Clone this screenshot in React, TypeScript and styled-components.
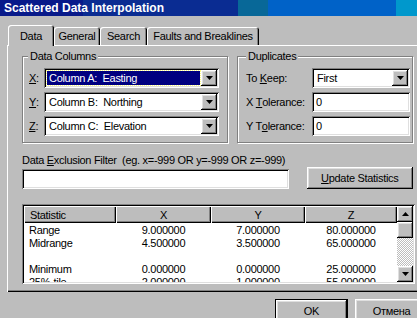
import React from "react";
import styled, { createGlobalStyle, css } from "styled-components";

const face = "#bdbdbd";
const shadow = "#808080";
const light = "#dfdfdf";

const raised = css`
  box-shadow: inset -1px -1px #000, inset 1px 1px #fff, inset -2px -2px ${shadow},
    inset 2px 2px ${light};
`;

const sunken = css`
  box-shadow: inset 1px 1px ${shadow}, inset -1px -1px #fff, inset 2px 2px #000,
    inset -2px -2px ${light};
`;

const GlobalStyle = createGlobalStyle`
  html, body {
    margin: 0;
    overflow: hidden;
    background: ${face};
  }
  body {
    font-family: "Liberation Sans", Arial, sans-serif;
    font-size: 11px;
    letter-spacing: -0.3px;
    color: #000;
  }
`;

const Window = styled.div`
  width: 432px;
  height: 318px;
  display: flex;
  flex-direction: column;
  background: ${face};
`;

const TitleBar = styled.div`
  height: 16px;
  flex-shrink: 0;
  display: flex;
  align-items: center;
  padding-left: 4px;
  color: #fff;
  font-weight: bold;
  font-size: 12px;
  letter-spacing: 0;
  background: linear-gradient(
    to right,
    #081a8a 0 83px,
    #0a2c92 83px 238px,
    #086898 238px 268px,
    #0062c8 268px 396px,
    #0098cc 396px
  );
`;

const Body = styled.div`
  flex: 1;
  display: flex;
  flex-direction: column;
  padding: 9px 4px 0 7px;
`;

const TabStrip = styled.div`
  display: flex;
  align-items: flex-end;
  height: 20px;
  padding-left: 1px;
`;

const Tab = styled.div<{ $active?: boolean; $width: number }>`
  width: ${(p) => p.$width}px;
  height: ${(p) => (p.$active ? 21 : 18)}px;
  margin-bottom: ${(p) => (p.$active ? -1 : 0)}px;
  position: relative;
  z-index: ${(p) => (p.$active ? 2 : 0)};
  display: flex;
  align-items: center;
  justify-content: center;
  background: ${face};
  border-radius: 3px 3px 0 0;
  box-shadow: inset 1px 1px #fff, inset -1px 0 #000, inset -2px 0 ${shadow};
`;

const Panel = styled.div`
  height: 247px;
  flex-shrink: 0;
  padding: 11px 15px 0 15px;
  box-sizing: border-box;
  box-shadow: inset 1px 1px #fff, inset -1px -1px #000, inset -2px -2px ${shadow};
`;

const GroupsRow = styled.div`
  display: flex;
  gap: 9px;
  height: 87px;
`;

const GroupBox = styled.div<{ $width: number; $labelCol: number; $padLeft: number }>`
  position: relative;
  width: ${(p) => p.$width}px;
  box-sizing: border-box;
  border: 1px solid ${shadow};
  box-shadow: 1px 1px 0 #fff, inset 1px 1px 0 #fff;
  padding: 11px 0 0 ${(p) => p.$padLeft}px;
  display: grid;
  grid-template-columns: ${(p) => p.$labelCol}px 1fr;
  grid-auto-rows: 20px;
  row-gap: 4px;
  align-content: start;
`;

const Legend = styled.span<{ $left: number }>`
  position: absolute;
  top: -7px;
  left: ${(p) => p.$left}px;
  padding: 0 2px;
  line-height: 13px;
  background: ${face};
`;

const FieldLabel = styled.label`
  display: flex;
  align-items: center;
  white-space: pre;
`;

const Combo = styled.div<{ $width: number }>`
  width: ${(p) => p.$width}px;
  height: 20px;
  box-sizing: border-box;
  padding: 2px;
  display: flex;
  background: #fff;
  ${sunken};
`;

const ComboValue = styled.div<{ $focused?: boolean }>`
  flex: 1;
  display: flex;
  align-items: center;
  margin: 1px;
  padding-left: 2px;
  white-space: pre;
  ${(p) =>
    p.$focused &&
    css`
      background: #000080;
      color: #fff;
      outline: 1px dotted #ffff80;
    `}
`;

const DropButton = styled.div`
  width: 16px;
  display: flex;
  align-items: center;
  justify-content: center;
  background: ${face};
  ${raised};
`;

const TextField = styled.div<{ $width: number }>`
  width: ${(p) => p.$width}px;
  height: 20px;
  box-sizing: border-box;
  padding-left: 4px;
  display: flex;
  align-items: center;
  background: #fff;
  ${sunken};
`;

const FilterLabel = styled.div`
  margin-top: 11px;
  line-height: 13px;
  white-space: pre;
`;

const FilterRow = styled.div`
  display: flex;
  align-items: flex-end;
  gap: 18px;
  height: 22px;
`;

const Button = styled.div<{ $width: number; $height: number; $default?: boolean }>`
  width: ${(p) => p.$width}px;
  height: ${(p) => p.$height}px;
  box-sizing: border-box;
  display: flex;
  align-items: center;
  justify-content: center;
  background: ${face};
  ${(p) =>
    p.$default
      ? css`
          border: 1px solid #000;
          ${raised};
        `
      : raised};
`;

const Table = styled.div`
  margin-top: 15px;
  width: 393px;
  height: 80px;
  box-sizing: border-box;
  padding: 2px;
  display: grid;
  grid-template-columns: 1fr 16px;
  background: #fff;
  ${sunken};
`;

const TableBody = styled.div`
  overflow: hidden;
`;

const columns = "92px 95px 94px 92px";

const HeaderRow = styled.div`
  display: grid;
  grid-template-columns: ${columns};
  height: 17px;
`;

const HeaderCell = styled.div<{ $left?: boolean }>`
  display: flex;
  align-items: center;
  justify-content: ${(p) => (p.$left ? "flex-start" : "center")};
  padding-left: ${(p) => (p.$left ? 6 : 0)}px;
  background: ${face};
  box-shadow: inset 1px 1px #fff, inset -1px -1px #000, inset -2px -2px ${shadow};
`;

const Rows = styled.div`
  padding-top: 1px;
`;

const Row = styled.div`
  display: grid;
  grid-template-columns: ${columns};
  height: 13px;
  line-height: 13px;
`;

const Cell = styled.div<{ $left?: boolean }>`
  text-align: ${(p) => (p.$left ? "left" : "center")};
  padding-left: ${(p) => (p.$left ? 5 : 0)}px;
  white-space: pre;
`;

const ScrollBar = styled.div`
  display: flex;
  flex-direction: column;
`;

const ScrollButton = styled.div`
  height: 16px;
  flex-shrink: 0;
  display: flex;
  align-items: center;
  justify-content: center;
  background: ${face};
  ${raised};
`;

const Track = styled.div`
  flex: 1;
  background: repeating-conic-gradient(#fff 0 25%, ${face} 0 50%) 0 0 / 2px 2px;
`;

const ButtonRow = styled.div`
  display: flex;
  justify-content: flex-end;
  gap: 7px;
  margin-top: 7px;
`;

const Arrow = ({ up }: { up?: boolean }) => (
  <svg width="7" height="4" viewBox="0 0 7 4">
    <path d={up ? "M3.5 0L7 4H0z" : "M0 0h7L3.5 4z"} fill="#000" />
  </svg>
);

const ComboBox = ({
  value,
  width,
  focused,
}: {
  value: string;
  width: number;
  focused?: boolean;
}) => (
  <Combo $width={width}>
    <ComboValue $focused={focused}>{value}</ComboValue>
    <DropButton>
      <Arrow />
    </DropButton>
  </Combo>
);

const stats = [
  ["Range", "9.000000", "7.000000", "80.000000"],
  ["Midrange", "4.500000", "3.500000", "65.000000"],
  ["", "", "", ""],
  ["Minimum", "0.000000", "0.000000", "25.000000"],
  ["25%-tile", "2.000000", "1.000000", "55.000000"],
];

export default function App() {
  return (
    <>
      <GlobalStyle />
      <Window>
        <TitleBar>Scattered Data Interpolation</TitleBar>
        <Body>
          <TabStrip>
            <Tab $active $width={46}>Data</Tab>
            <Tab $width={46}>General</Tab>
            <Tab $width={47}>Search</Tab>
            <Tab $width={112}>Faults and Breaklines</Tab>
          </TabStrip>
          <Panel>
            <GroupsRow>
              <GroupBox $width={206} $labelCol={15} $padLeft={6}>
                <Legend $left={5}>Data Columns</Legend>
                <FieldLabel>
                  <u>X</u>:
                </FieldLabel>
                <ComboBox value="Column A:  Easting" width={175} focused />
                <FieldLabel>
                  <u>Y</u>:
                </FieldLabel>
                <ComboBox value="Column B:  Northing" width={175} />
                <FieldLabel>
                  <u>Z</u>:
                </FieldLabel>
                <ComboBox value="Column C:  Elevation" width={175} />
              </GroupBox>
              <GroupBox $width={176} $labelCol={66} $padLeft={8}>
                <Legend $left={8}>Duplicates</Legend>
                <FieldLabel>
                  To <u>K</u>eep:
                </FieldLabel>
                <ComboBox value="First" width={98} />
                <FieldLabel>
                  X <u>T</u>olerance:
                </FieldLabel>
                <TextField $width={98}>0</TextField>
                <FieldLabel>
                  Y T<u>o</u>lerance:
                </FieldLabel>
                <TextField $width={98}>0</TextField>
              </GroupBox>
            </GroupsRow>
            <FilterLabel>
              Data <u>E</u>xclusion Filter  (eg. x=-999 OR y=-999 OR z=-999)
            </FilterLabel>
            <FilterRow>
              <TextField $width={268} />
              <Button $width={107} $height={22}>
                <span>
                  <u>U</u>pdate Statistics
                </span>
              </Button>
            </FilterRow>
            <Table>
              <TableBody>
                <HeaderRow>
                  <HeaderCell $left>Statistic</HeaderCell>
                  <HeaderCell>X</HeaderCell>
                  <HeaderCell>Y</HeaderCell>
                  <HeaderCell>Z</HeaderCell>
                </HeaderRow>
                <Rows>
                  {stats.map((r, i) => (
                    <Row key={i}>
                      <Cell $left>{r[0]}</Cell>
                      <Cell>{r[1]}</Cell>
                      <Cell>{r[2]}</Cell>
                      <Cell>{r[3]}</Cell>
                    </Row>
                  ))}
                </Rows>
              </TableBody>
              <ScrollBar>
                <ScrollButton>
                  <Arrow up />
                </ScrollButton>
                <ScrollButton />
                <Track />
                <ScrollButton>
                  <Arrow />
                </ScrollButton>
              </ScrollBar>
            </Table>
          </Panel>
          <ButtonRow>
            <Button $width={73} $height={23} $default>
              OK
            </Button>
            <Button $width={73} $height={23}>
              Отмена
            </Button>
          </ButtonRow>
        </Body>
      </Window>
    </>
  );
}
